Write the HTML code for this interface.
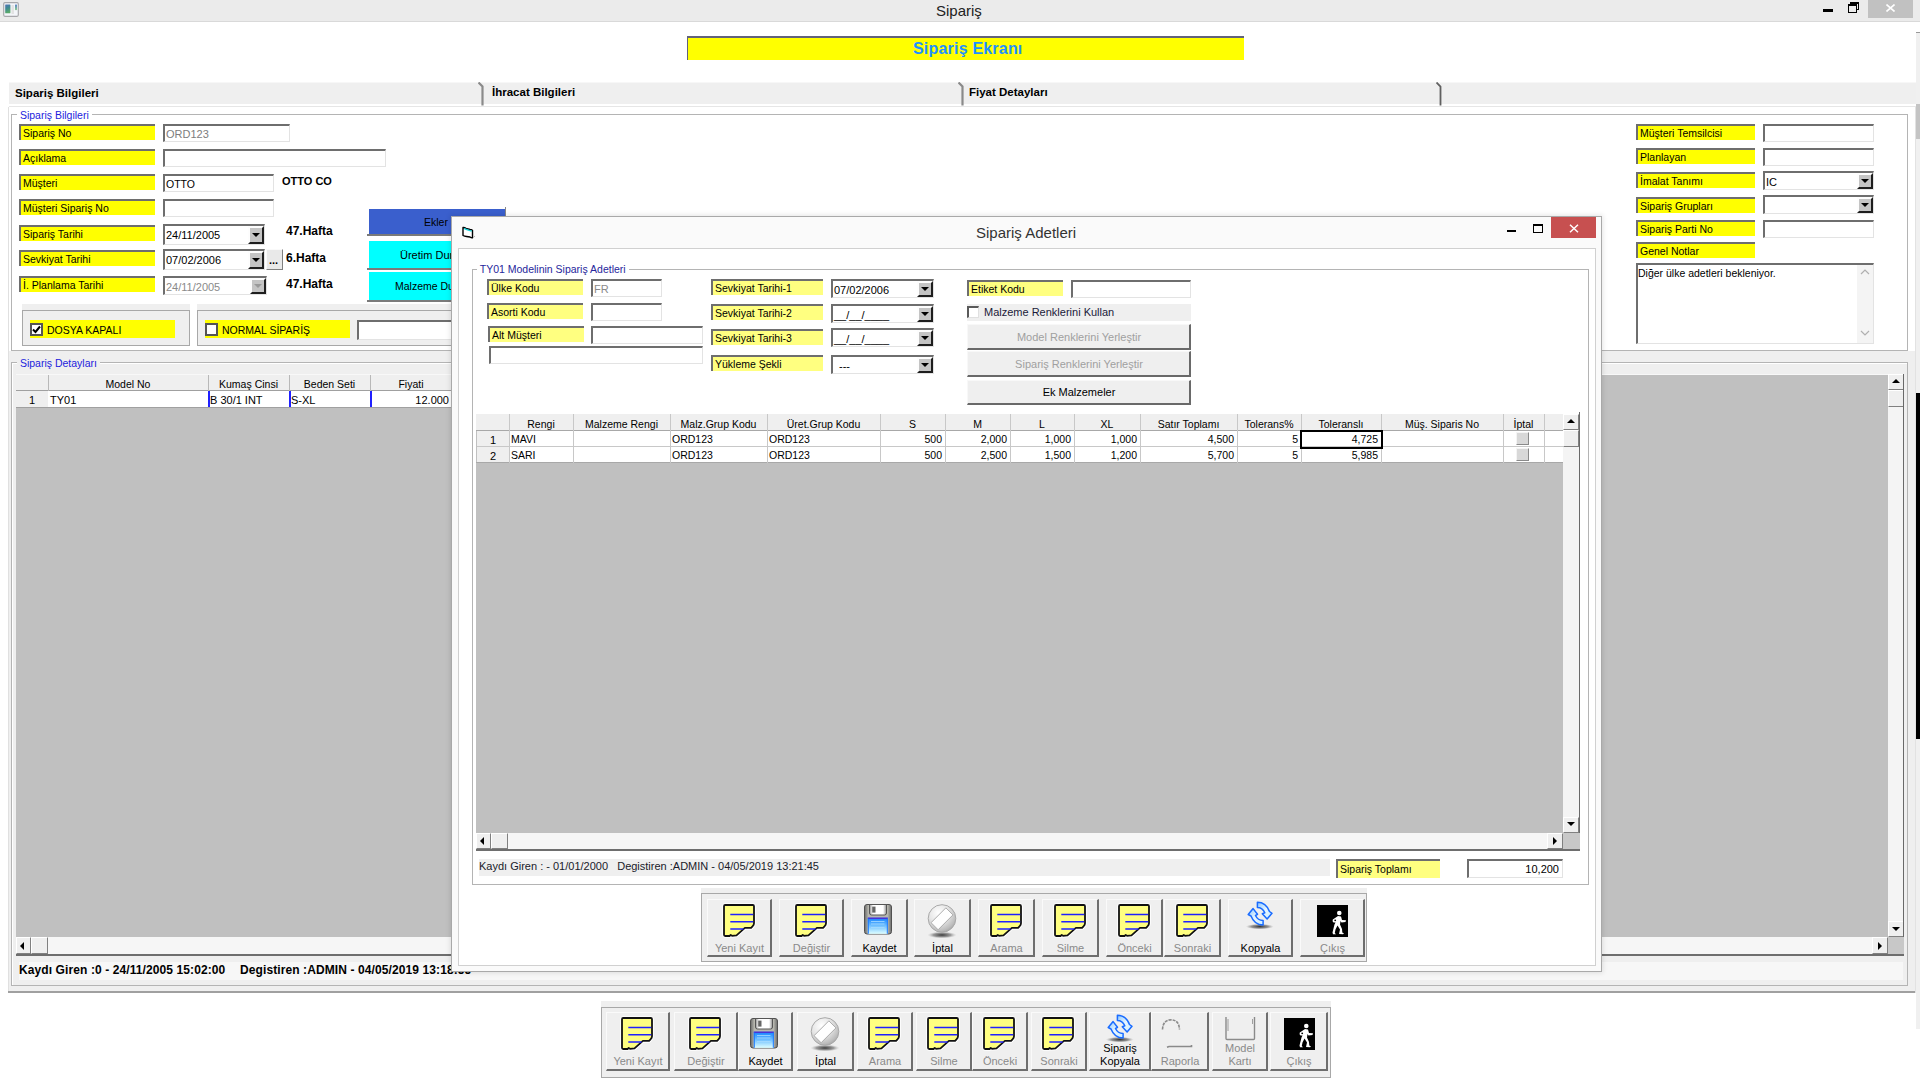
<!DOCTYPE html>
<html><head><meta charset="utf-8"><title>Sipariş</title>
<style>
html,body{margin:0;padding:0;}
body{width:1920px;height:1080px;position:relative;overflow:hidden;background:#fff;font-family:"Liberation Sans",sans-serif;font-size:11px;color:#000;}
body div, body svg{position:absolute;}
</style></head><body>
<div style="left:0px;top:0px;width:1920px;height:21px;background:#ebebeb;"></div>
<div style="left:0px;top:21px;width:1920px;height:1px;background:#d9d9d9;"></div>
<svg style="left:3px;top:2px" width="16" height="15" viewBox="0 0 16 15">
<defs><linearGradient id="ai1" x1="0" x2="0.3" y1="0" y2="1"><stop offset="0" stop-color="#4f72b8"/><stop offset="0.5" stop-color="#3f8a90"/><stop offset="1" stop-color="#5aaa6a"/></linearGradient>
<linearGradient id="ai2" x1="0" x2="0" y1="0" y2="1"><stop offset="0" stop-color="#5a80c8"/><stop offset="1" stop-color="#8ed08e"/></linearGradient></defs>
<rect x="0.7" y="0.7" width="14.6" height="13.6" rx="1.2" fill="#f4f6fa" stroke="#a8a8ac" stroke-width="1.2"/>
<rect x="2.2" y="2.6" width="5.2" height="8.6" rx="0.5" fill="url(#ai1)"/>
<rect x="8.5" y="3" width="2.4" height="9" fill="#e2e2e2"/>
<rect x="12" y="2.6" width="2" height="5.5" fill="url(#ai2)"/>
</svg>
<div style="left:936px;top:1px;font-size:15px;line-height:19px;color:#222;white-space:pre;">Sipariş</div>
<div style="left:1823px;top:9px;width:10px;height:3px;background:#000;"></div>
<div style="left:1850px;top:2px;width:9px;height:8px;box-sizing:border-box;border:1px solid #000;border-top-width:2px;"></div>
<div style="left:1848px;top:4px;width:9px;height:9px;box-sizing:border-box;border:1px solid #000;border-top-width:2px;background:#ebebeb;"></div>
<div style="left:1868px;top:0px;width:45px;height:18px;background:#c1c1c1;"></div>
<svg style="left:1886px;top:4px" width="9" height="8" viewBox="0 0 9 8"><path d="M0.5 0.5 L8.5 7.5 M8.5 0.5 L0.5 7.5" stroke="#fff" stroke-width="1.6"/></svg>
<div style="left:1916px;top:32px;width:4px;height:997px;background:#f0f0f0;"></div>
<div style="left:1916px;top:32px;width:4px;height:1px;background:#999;"></div>
<div style="left:1916px;top:104px;width:4px;height:35px;background:#c4c4c4;"></div>
<div style="left:1916px;top:393px;width:4px;height:346px;background:#000;"></div>
<div style="left:687px;top:36px;width:557px;height:24px;background:#ffff00;box-sizing:border-box;border-top:2px solid #62627a;border-left:1px solid #62627a;"></div>
<div style="left:913px;top:39px;font-size:16px;line-height:20px;color:#1e90ff;white-space:pre;font-weight:bold;letter-spacing:0.2px;">Sipariş Ekranı</div>
<div style="left:9px;top:82px;width:1907px;height:22px;background:#efefef;border-top:1px solid #f7f7f7;box-sizing:border-box;"></div>
<div style="left:9px;top:104px;width:1907px;height:2px;background:#fff;"></div>
<div style="left:9px;top:106px;width:1907px;height:1px;background:#e6e6e6;"></div>
<div style="left:15px;top:86px;font-size:11.5px;line-height:14px;color:#000;white-space:pre;font-weight:bold;">Sipariş Bilgileri</div>
<div style="left:492px;top:85px;font-size:11.5px;line-height:14px;color:#000;white-space:pre;font-weight:bold;">İhracat Bilgileri</div>
<div style="left:969px;top:85px;font-size:11.5px;line-height:14px;color:#000;white-space:pre;font-weight:bold;">Fiyat Detayları</div>
<svg style="left:478px;top:82px" width="8" height="25" viewBox="0 0 8 25"><path d="M0.5 0.5 L4.5 4.5 V23.5" stroke="#8a8a8a" stroke-width="2.2" fill="none"/></svg>
<svg style="left:958px;top:82px" width="8" height="25" viewBox="0 0 8 25"><path d="M0.5 0.5 L4.5 4.5 V23.5" stroke="#8a8a8a" stroke-width="2.2" fill="none"/></svg>
<svg style="left:1436px;top:82px" width="8" height="25" viewBox="0 0 8 25"><path d="M0.5 0.5 L4.5 4.5 V23.5" stroke="#606060" stroke-width="1.8" fill="none"/></svg>
<div style="left:9px;top:107px;width:1907px;height:244px;background:#fff;"></div>
<div style="left:9px;top:351px;width:1907px;height:640px;background:#efefef;"></div>
<div style="left:8px;top:107px;width:1px;height:886px;background:#e0e0e0;"></div>
<div style="left:8px;top:991px;width:1908px;height:2px;background:#a0a0a0;"></div>
<div style="left:1915px;top:107px;width:1px;height:886px;background:#e2e2e2;"></div>
<div style="left:11px;top:114px;width:1897px;height:237px;background:#fff;box-sizing:border-box;border:1px solid #b4b4b4;"></div>
<div style="left:17px;top:109px;font-size:10.5px;line-height:13px;color:#2222dd;white-space:pre;background:#fff;"> Sipariş Bilgileri </div>
<div style="left:19px;top:124px;width:136px;height:16px;background:#ffff00;box-sizing:border-box;border-top:2px solid #6e6e6e;border-left:2px solid #6e6e6e;"></div>
<div style="left:23px;top:127px;font-size:10.5px;line-height:13px;color:#000;white-space:pre;">Sipariş No</div>
<div style="left:19px;top:149px;width:136px;height:16px;background:#ffff00;box-sizing:border-box;border-top:2px solid #6e6e6e;border-left:2px solid #6e6e6e;"></div>
<div style="left:23px;top:152px;font-size:10.5px;line-height:13px;color:#000;white-space:pre;">Açıklama</div>
<div style="left:19px;top:174px;width:136px;height:16px;background:#ffff00;box-sizing:border-box;border-top:2px solid #6e6e6e;border-left:2px solid #6e6e6e;"></div>
<div style="left:23px;top:177px;font-size:10.5px;line-height:13px;color:#000;white-space:pre;">Müşteri</div>
<div style="left:19px;top:199px;width:136px;height:16px;background:#ffff00;box-sizing:border-box;border-top:2px solid #6e6e6e;border-left:2px solid #6e6e6e;"></div>
<div style="left:23px;top:202px;font-size:10.5px;line-height:13px;color:#000;white-space:pre;">Müşteri Sipariş No</div>
<div style="left:19px;top:225px;width:136px;height:16px;background:#ffff00;box-sizing:border-box;border-top:2px solid #6e6e6e;border-left:2px solid #6e6e6e;"></div>
<div style="left:23px;top:228px;font-size:10.5px;line-height:13px;color:#000;white-space:pre;">Sipariş Tarihi</div>
<div style="left:19px;top:250px;width:136px;height:16px;background:#ffff00;box-sizing:border-box;border-top:2px solid #6e6e6e;border-left:2px solid #6e6e6e;"></div>
<div style="left:23px;top:253px;font-size:10.5px;line-height:13px;color:#000;white-space:pre;">Sevkiyat Tarihi</div>
<div style="left:19px;top:276px;width:136px;height:16px;background:#ffff00;box-sizing:border-box;border-top:2px solid #6e6e6e;border-left:2px solid #6e6e6e;"></div>
<div style="left:23px;top:279px;font-size:10.5px;line-height:13px;color:#000;white-space:pre;">İ. Planlama Tarihi</div>
<div style="left:163px;top:124px;width:127px;height:18px;background:#fff;box-sizing:border-box;border-top:2px solid #6e6e6e;border-left:2px solid #6e6e6e;border-right:1px solid #e3e3e3;border-bottom:1px solid #e3e3e3;"></div>
<div style="left:166px;top:127px;font-size:11px;line-height:14px;color:#7d7d7d;white-space:pre;">ORD123</div>
<div style="left:163px;top:149px;width:223px;height:18px;background:#fff;box-sizing:border-box;border-top:2px solid #6e6e6e;border-left:2px solid #6e6e6e;border-right:1px solid #e3e3e3;border-bottom:1px solid #e3e3e3;"></div>
<div style="left:163px;top:174px;width:111px;height:18px;background:#fff;box-sizing:border-box;border-top:2px solid #6e6e6e;border-left:2px solid #6e6e6e;border-right:1px solid #e3e3e3;border-bottom:1px solid #e3e3e3;"></div>
<div style="left:166px;top:178px;font-size:10.5px;line-height:13px;color:#000;white-space:pre;">OTTO</div>
<div style="left:163px;top:199px;width:111px;height:18px;background:#fff;box-sizing:border-box;border-top:2px solid #6e6e6e;border-left:2px solid #6e6e6e;border-right:1px solid #e3e3e3;border-bottom:1px solid #e3e3e3;"></div>
<div style="left:163px;top:224px;width:102px;height:21px;background:#fff;box-sizing:border-box;border-top:2px solid #6e6e6e;border-left:2px solid #6e6e6e;border-right:1px solid #e3e3e3;border-bottom:1px solid #e3e3e3;"></div>
<div style="left:166px;top:228px;font-size:11px;line-height:14px;color:#000;white-space:pre;">24/11/2005</div>
<div style="left:248px;top:226px;width:16px;height:18px;background:#c4c4c4;box-sizing:border-box;border-top:2px solid #fdfdfd;border-left:2px solid #fdfdfd;border-right:2px solid #1e1e1e;border-bottom:2px solid #1e1e1e;"></div>
<div style="left:251.5px;top:233.0px;width:0;height:0;border-left:4.0px solid transparent;border-right:4.0px solid transparent;border-top:4px solid #000;"></div>
<div style="left:163px;top:249px;width:102px;height:21px;background:#fff;box-sizing:border-box;border-top:2px solid #6e6e6e;border-left:2px solid #6e6e6e;border-right:1px solid #e3e3e3;border-bottom:1px solid #e3e3e3;"></div>
<div style="left:166px;top:253px;font-size:11px;line-height:14px;color:#000;white-space:pre;">07/02/2006</div>
<div style="left:248px;top:251px;width:16px;height:18px;background:#c4c4c4;box-sizing:border-box;border-top:2px solid #fdfdfd;border-left:2px solid #fdfdfd;border-right:2px solid #1e1e1e;border-bottom:2px solid #1e1e1e;"></div>
<div style="left:251.5px;top:258.0px;width:0;height:0;border-left:4.0px solid transparent;border-right:4.0px solid transparent;border-top:4px solid #000;"></div>
<div style="left:266px;top:249px;width:17px;height:21px;background:#e9e9e9;box-sizing:border-box;border-top:1px solid #fafafa;border-left:1px solid #fafafa;border-right:1px solid #808080;border-bottom:1px solid #808080;"></div>
<div style="left:269px;top:253px;font-size:11px;line-height:14px;color:#000;white-space:pre;font-weight:bold;">...</div>
<div style="left:163px;top:276px;width:104px;height:19px;background:#fff;box-sizing:border-box;border-top:2px solid #6e6e6e;border-left:2px solid #6e6e6e;border-right:1px solid #e3e3e3;border-bottom:1px solid #e3e3e3;"></div>
<div style="left:166px;top:280px;font-size:11px;line-height:14px;color:#8a8a8a;white-space:pre;">24/11/2005</div>
<div style="left:250px;top:278px;width:16px;height:16px;background:#c4c4c4;box-sizing:border-box;border-top:2px solid #fdfdfd;border-left:2px solid #fdfdfd;border-right:2px solid #1e1e1e;border-bottom:2px solid #1e1e1e;"></div>
<div style="left:253.5px;top:284.0px;width:0;height:0;border-left:4.0px solid transparent;border-right:4.0px solid transparent;border-top:4px solid #9a9a9a;"></div>
<div style="left:282px;top:174px;font-size:11px;line-height:14px;color:#000;white-space:pre;font-weight:bold;">OTTO CO</div>
<div style="left:286px;top:224px;font-size:12px;line-height:15px;color:#000;white-space:pre;font-weight:bold;">47.Hafta</div>
<div style="left:286px;top:251px;font-size:12px;line-height:15px;color:#000;white-space:pre;font-weight:bold;">6.Hafta</div>
<div style="left:286px;top:277px;font-size:12px;line-height:15px;color:#000;white-space:pre;font-weight:bold;">47.Hafta</div>
<div style="left:369px;top:209px;width:137px;height:25px;background:#3a5fcd;"></div>
<div style="left:367px;top:234px;width:139px;height:2px;background:#7a7a7a;"></div>
<div style="left:505px;top:207px;width:1px;height:27px;background:#888;"></div>
<div style="left:424px;top:216px;font-size:10.5px;line-height:13px;color:#000;white-space:pre;">Ekler</div>
<div style="left:369px;top:241px;width:137px;height:27px;background:#00ffff;"></div>
<div style="left:367px;top:268px;width:139px;height:2px;background:#7a7a7a;"></div>
<div style="left:400px;top:248px;font-size:11px;line-height:14px;color:#000;white-space:pre;">Üretim Durumu</div>
<div style="left:369px;top:272px;width:137px;height:28px;background:#00ffff;"></div>
<div style="left:367px;top:300px;width:139px;height:2px;background:#7a7a7a;"></div>
<div style="left:395px;top:280px;font-size:10.5px;line-height:13px;color:#000;white-space:pre;">Malzeme Durumu</div>
<div style="left:22px;top:304px;width:168px;height:42px;background:#efefef;"></div>
<div style="left:22px;top:310px;width:168px;height:36px;box-sizing:border-box;border:1px solid #a8a8a8;"></div>
<div style="left:30px;top:320px;width:145px;height:18px;background:#ffff00;"></div>
<div style="left:30px;top:323px;width:13px;height:13px;background:#fff;box-sizing:border-box;border:2px solid #555;"></div>
<svg style="left:30px;top:323px" width="13" height="13" viewBox="0 0 13 13"><path d="M3 6.5 L5.5 9 L10 3.5" stroke="#000" stroke-width="2" fill="none"/></svg>
<div style="left:47px;top:324px;font-size:10.5px;line-height:13px;color:#000;white-space:pre;">DOSYA KAPALI</div>
<div style="left:197px;top:304px;width:300px;height:42px;background:#efefef;"></div>
<div style="left:197px;top:310px;width:300px;height:36px;box-sizing:border-box;border:1px solid #a8a8a8;"></div>
<div style="left:205px;top:320px;width:145px;height:18px;background:#ffff00;"></div>
<div style="left:205px;top:323px;width:13px;height:13px;background:#fff;box-sizing:border-box;border:2px solid #555;"></div>
<div style="left:222px;top:324px;font-size:10.5px;line-height:13px;color:#000;white-space:pre;">NORMAL SİPARİŞ</div>
<div style="left:357px;top:320px;width:140px;height:20px;background:#fff;box-sizing:border-box;border-top:2px solid #6e6e6e;border-left:2px solid #6e6e6e;border-right:1px solid #e3e3e3;border-bottom:1px solid #e3e3e3;"></div>
<div style="left:1636px;top:124px;width:119px;height:16px;background:#ffff00;box-sizing:border-box;border-top:2px solid #6e6e6e;border-left:2px solid #6e6e6e;"></div>
<div style="left:1640px;top:127px;font-size:10.5px;line-height:13px;color:#000;white-space:pre;">Müşteri Temsilcisi</div>
<div style="left:1636px;top:148px;width:119px;height:16px;background:#ffff00;box-sizing:border-box;border-top:2px solid #6e6e6e;border-left:2px solid #6e6e6e;"></div>
<div style="left:1640px;top:151px;font-size:10.5px;line-height:13px;color:#000;white-space:pre;">Planlayan</div>
<div style="left:1636px;top:172px;width:119px;height:16px;background:#ffff00;box-sizing:border-box;border-top:2px solid #6e6e6e;border-left:2px solid #6e6e6e;"></div>
<div style="left:1640px;top:175px;font-size:10.5px;line-height:13px;color:#000;white-space:pre;">İmalat Tanımı</div>
<div style="left:1636px;top:197px;width:119px;height:16px;background:#ffff00;box-sizing:border-box;border-top:2px solid #6e6e6e;border-left:2px solid #6e6e6e;"></div>
<div style="left:1640px;top:200px;font-size:10.5px;line-height:13px;color:#000;white-space:pre;">Sipariş Grupları</div>
<div style="left:1636px;top:220px;width:119px;height:16px;background:#ffff00;box-sizing:border-box;border-top:2px solid #6e6e6e;border-left:2px solid #6e6e6e;"></div>
<div style="left:1640px;top:223px;font-size:10.5px;line-height:13px;color:#000;white-space:pre;">Sipariş Parti No</div>
<div style="left:1636px;top:242px;width:119px;height:16px;background:#ffff00;box-sizing:border-box;border-top:2px solid #6e6e6e;border-left:2px solid #6e6e6e;"></div>
<div style="left:1640px;top:245px;font-size:10.5px;line-height:13px;color:#000;white-space:pre;">Genel Notlar</div>
<div style="left:1763px;top:124px;width:111px;height:18px;background:#fff;box-sizing:border-box;border-top:2px solid #6e6e6e;border-left:2px solid #6e6e6e;border-right:1px solid #e3e3e3;border-bottom:1px solid #e3e3e3;"></div>
<div style="left:1763px;top:148px;width:111px;height:18px;background:#fff;box-sizing:border-box;border-top:2px solid #6e6e6e;border-left:2px solid #6e6e6e;border-right:1px solid #e3e3e3;border-bottom:1px solid #e3e3e3;"></div>
<div style="left:1763px;top:171px;width:111px;height:19px;background:#fff;box-sizing:border-box;border-top:2px solid #6e6e6e;border-left:2px solid #6e6e6e;border-right:1px solid #e3e3e3;border-bottom:1px solid #e3e3e3;"></div>
<div style="left:1766px;top:175px;font-size:11px;line-height:14px;color:#000;white-space:pre;">IC</div>
<div style="left:1857px;top:173px;width:16px;height:16px;background:#c4c4c4;box-sizing:border-box;border-top:2px solid #fdfdfd;border-left:2px solid #fdfdfd;border-right:2px solid #1e1e1e;border-bottom:2px solid #1e1e1e;"></div>
<div style="left:1860.5px;top:179.0px;width:0;height:0;border-left:4.0px solid transparent;border-right:4.0px solid transparent;border-top:4px solid #000;"></div>
<div style="left:1763px;top:195px;width:111px;height:19px;background:#fff;box-sizing:border-box;border-top:2px solid #6e6e6e;border-left:2px solid #6e6e6e;border-right:1px solid #e3e3e3;border-bottom:1px solid #e3e3e3;"></div>
<div style="left:1857px;top:197px;width:16px;height:16px;background:#c4c4c4;box-sizing:border-box;border-top:2px solid #fdfdfd;border-left:2px solid #fdfdfd;border-right:2px solid #1e1e1e;border-bottom:2px solid #1e1e1e;"></div>
<div style="left:1860.5px;top:203.0px;width:0;height:0;border-left:4.0px solid transparent;border-right:4.0px solid transparent;border-top:4px solid #000;"></div>
<div style="left:1763px;top:220px;width:111px;height:18px;background:#fff;box-sizing:border-box;border-top:2px solid #6e6e6e;border-left:2px solid #6e6e6e;border-right:1px solid #e3e3e3;border-bottom:1px solid #e3e3e3;"></div>
<div style="left:1636px;top:263px;width:238px;height:81px;background:#fff;box-sizing:border-box;border-top:2px solid #6e6e6e;border-left:2px solid #6e6e6e;border-right:1px solid #e3e3e3;border-bottom:1px solid #e3e3e3;"></div>
<div style="left:1638px;top:267px;font-size:10.5px;line-height:13px;color:#000;white-space:pre;">Diğer ülke adetleri bekleniyor.</div>
<div style="left:1857px;top:265px;width:16px;height:78px;background:#f4f4f4;"></div>
<svg style="left:1860px;top:269px" width="10" height="6" viewBox="0 0 10 6"><path d="M1 5 L5 1 L9 5" stroke="#b0b0b0" stroke-width="1.2" fill="none"/></svg>
<svg style="left:1860px;top:330px" width="10" height="6" viewBox="0 0 10 6"><path d="M1 1 L5 5 L9 1" stroke="#b0b0b0" stroke-width="1.2" fill="none"/></svg>
<div style="left:11px;top:362px;width:1897px;height:624px;box-sizing:border-box;border:1px solid #b4b4b4;"></div>
<div style="left:12px;top:363px;width:1895px;height:622px;box-sizing:border-box;border:1px solid #fff;border-right:none;border-bottom:none;"></div>
<div style="left:17px;top:357px;font-size:10.5px;line-height:13px;color:#2222dd;white-space:pre;background:#efefef;"> Sipariş Detayları </div>
<div style="left:16px;top:374px;width:1888px;height:582px;background:#c0c0c0;"></div>
<div style="left:16px;top:374px;width:1888px;height:1px;background:#f8f8f8;"></div>
<div style="left:16px;top:375px;width:436px;height:16px;background:#efefef;"></div>
<div style="left:16px;top:390px;width:436px;height:1px;background:#a0a0a0;"></div>
<div style="left:48px;top:375px;width:1px;height:32px;background:#b8b8b8;"></div>
<div style="left:48px;top:378px;font-size:10.5px;line-height:13px;color:#000;white-space:pre;width:160px;text-align:center;">Model No</div>
<div style="left:208px;top:375px;width:1px;height:32px;background:#b8b8b8;"></div>
<div style="left:208px;top:378px;font-size:10.5px;line-height:13px;color:#000;white-space:pre;width:81px;text-align:center;">Kumaş Cinsi</div>
<div style="left:289px;top:375px;width:1px;height:32px;background:#b8b8b8;"></div>
<div style="left:289px;top:378px;font-size:10.5px;line-height:13px;color:#000;white-space:pre;width:81px;text-align:center;">Beden Seti</div>
<div style="left:370px;top:375px;width:1px;height:32px;background:#b8b8b8;"></div>
<div style="left:370px;top:378px;font-size:10.5px;line-height:13px;color:#000;white-space:pre;width:82px;text-align:center;">Fiyati</div>
<div style="left:16px;top:391px;width:32px;height:16px;background:#efefef;"></div>
<div style="left:48px;top:391px;width:404px;height:16px;background:#fff;"></div>
<div style="left:16px;top:407px;width:436px;height:1px;background:#a0a0a0;"></div>
<div style="left:16px;top:393px;font-size:11px;line-height:14px;color:#000;white-space:pre;width:32px;text-align:center;">1</div>
<div style="left:50px;top:393px;font-size:11px;line-height:14px;color:#000;white-space:pre;">TY01</div>
<div style="left:210px;top:393px;font-size:11px;line-height:14px;color:#000;white-space:pre;">B 30/1 INT</div>
<div style="left:291px;top:393px;font-size:11px;line-height:14px;color:#000;white-space:pre;">S-XL</div>
<div style="left:370px;top:393px;font-size:11px;line-height:14px;color:#000;white-space:pre;width:79px;text-align:right;">12.000</div>
<div style="left:208px;top:391px;width:2px;height:16px;background:#2020ff;"></div>
<div style="left:289px;top:391px;width:2px;height:16px;background:#2020ff;"></div>
<div style="left:370px;top:391px;width:2px;height:16px;background:#2020ff;"></div>
<div style="left:1888px;top:374px;width:16px;height:563px;background:#f4f4f4;"></div>
<div style="left:1888px;top:374px;width:16px;height:16px;background:#efefef;box-sizing:border-box;border-top:1px solid #fff;border-left:1px solid #fff;border-right:1px solid #808080;border-bottom:1px solid #808080;"></div>
<div style="left:1891.5px;top:379px;width:0;height:0;border-left:4.0px solid transparent;border-right:4.0px solid transparent;border-bottom:4px solid #000;"></div>
<div style="left:1888px;top:390px;width:16px;height:17px;background:#efefef;box-sizing:border-box;border-top:1px solid #fff;border-left:1px solid #fff;border-right:1px solid #808080;border-bottom:1px solid #808080;"></div>
<div style="left:1888px;top:921px;width:16px;height:16px;background:#efefef;box-sizing:border-box;border-top:1px solid #fff;border-left:1px solid #fff;border-right:1px solid #808080;border-bottom:1px solid #808080;"></div>
<div style="left:1891.5px;top:927px;width:0;height:0;border-left:4.0px solid transparent;border-right:4.0px solid transparent;border-top:4px solid #000;"></div>
<div style="left:1903px;top:374px;width:1px;height:582px;background:#696969;"></div>
<div style="left:16px;top:937px;width:1872px;height:17px;background:#f6f6f6;"></div>
<div style="left:16px;top:937px;width:15px;height:17px;background:#efefef;box-sizing:border-box;border-top:1px solid #fff;border-left:1px solid #fff;border-right:1px solid #808080;border-bottom:1px solid #808080;"></div>
<div style="left:20px;top:941.5px;width:0;height:0;border-top:4.0px solid transparent;border-bottom:4.0px solid transparent;border-right:4px solid #000;"></div>
<div style="left:31px;top:937px;width:17px;height:17px;background:#efefef;box-sizing:border-box;border-top:1px solid #fff;border-left:1px solid #fff;border-right:1px solid #808080;border-bottom:1px solid #808080;"></div>
<div style="left:1872px;top:937px;width:16px;height:17px;background:#efefef;box-sizing:border-box;border-top:1px solid #fff;border-left:1px solid #fff;border-right:1px solid #808080;border-bottom:1px solid #808080;"></div>
<div style="left:1878px;top:941.5px;width:0;height:0;border-top:4.0px solid transparent;border-bottom:4.0px solid transparent;border-left:4px solid #000;"></div>
<div style="left:1888px;top:937px;width:16px;height:17px;background:#c8c8c8;"></div>
<div style="left:16px;top:954px;width:1888px;height:2px;background:#6e6e6e;"></div>
<div style="left:19px;top:962px;width:1884px;height:18px;background:#f7f7f7;"></div>
<div style="left:19px;top:963px;font-size:12px;line-height:15px;color:#000;white-space:pre;font-weight:bold;letter-spacing:0.1px;">Kaydı Giren :0 - 24/11/2005 15:02:00</div>
<div style="left:240px;top:963px;font-size:12px;line-height:15px;color:#000;white-space:pre;font-weight:bold;letter-spacing:0.1px;">Degistiren :ADMIN - 04/05/2019 13:18:55</div>
<div style="left:601px;top:1001px;width:730px;height:7px;background:#efefef;"></div>
<div style="left:601px;top:1007px;width:730px;height:71px;background:#efefef;box-sizing:border-box;border:1px solid #a8a8a8;"></div>
<div style="left:606px;top:1012px;width:64px;height:59px;background:#efefef;box-sizing:border-box;border-top:1px solid #fafafa;border-left:1px solid #fafafa;border-right:2px solid #6e6e6e;border-bottom:2px solid #6e6e6e;"></div>
<svg style="left:619px;top:1015px" width="36" height="37" viewBox="-2 -2 36 37">
<path d="M1 2.2 Q1 1 2.2 1 L29.8 1 Q31 1 31 2.2 L31 19.3 Q31 21 29.5 22.4 L28.1 23.9 L21.9 23.9 L13.5 31.4 L9 31.8 L7.7 31 L6.5 32 L2.2 32 Q1 32 1 30.8 Z" fill="#ffff80" stroke="#fff" stroke-width="3.6" stroke-linejoin="round"/>
<path d="M1 2.2 Q1 1 2.2 1 L29.8 1 Q31 1 31 2.2 L31 19.3 Q31 21 29.5 22.4 L28.1 23.9 L21.9 23.9 L13.5 31.4 L9 31.8 L7.7 31 L6.5 32 L2.2 32 Q1 32 1 30.8 Z" fill="#ffff80" stroke="#111" stroke-width="1.8" stroke-linejoin="round"/>
<path d="M7.3 10.5 H30.2 M7.3 17.8 H30.2 M7.3 25 H20.5" stroke="#2020ff" stroke-width="1.4"/>
</svg>
<div style="left:606px;top:1054px;font-size:11px;line-height:14px;color:#8a8a8a;white-space:pre;width:64px;text-align:center;">Yeni Kayıt</div>
<div style="left:674px;top:1012px;width:64px;height:59px;background:#efefef;box-sizing:border-box;border-top:1px solid #fafafa;border-left:1px solid #fafafa;border-right:2px solid #6e6e6e;border-bottom:2px solid #6e6e6e;"></div>
<svg style="left:687px;top:1015px" width="36" height="37" viewBox="-2 -2 36 37">
<path d="M1 2.2 Q1 1 2.2 1 L29.8 1 Q31 1 31 2.2 L31 19.3 Q31 21 29.5 22.4 L28.1 23.9 L21.9 23.9 L13.5 31.4 L9 31.8 L7.7 31 L6.5 32 L2.2 32 Q1 32 1 30.8 Z" fill="#ffff80" stroke="#fff" stroke-width="3.6" stroke-linejoin="round"/>
<path d="M1 2.2 Q1 1 2.2 1 L29.8 1 Q31 1 31 2.2 L31 19.3 Q31 21 29.5 22.4 L28.1 23.9 L21.9 23.9 L13.5 31.4 L9 31.8 L7.7 31 L6.5 32 L2.2 32 Q1 32 1 30.8 Z" fill="#ffff80" stroke="#111" stroke-width="1.8" stroke-linejoin="round"/>
<path d="M7.3 10.5 H30.2 M7.3 17.8 H30.2 M7.3 25 H20.5" stroke="#2020ff" stroke-width="1.4"/>
</svg>
<div style="left:674px;top:1054px;font-size:11px;line-height:14px;color:#8a8a8a;white-space:pre;width:64px;text-align:center;">Değiştir</div>
<div style="left:738px;top:1012px;width:55px;height:59px;background:#efefef;box-sizing:border-box;border-top:1px solid #fafafa;border-left:1px solid #fafafa;border-right:2px solid #6e6e6e;border-bottom:2px solid #6e6e6e;"></div>
<svg style="left:750px;top:1018px" width="28" height="31" viewBox="0 0 28 31">
<defs><linearGradient id="fbody" x1="0" x2="1" y1="0" y2="0"><stop offset="0" stop-color="#6a6a6a"/><stop offset="0.15" stop-color="#b8b8b0"/><stop offset="0.85" stop-color="#b8b8b0"/><stop offset="1" stop-color="#6a6a6a"/></linearGradient>
<linearGradient id="flab" x1="0" x2="0" y1="0" y2="1"><stop offset="0" stop-color="#1080ff"/><stop offset="0.5" stop-color="#70c0ff"/><stop offset="1" stop-color="#e0ffff"/></linearGradient>
<linearGradient id="fsh" x1="0" x2="1" y1="0" y2="0"><stop offset="0" stop-color="#909090"/><stop offset="0.2" stop-color="#fff"/><stop offset="0.8" stop-color="#fff"/><stop offset="1" stop-color="#909090"/></linearGradient></defs>
<rect x="0.5" y="0.5" width="27" height="29.5" rx="2.5" fill="url(#fbody)" stroke="#505050"/>
<path d="M5.5 0.5 H22.5 V9 Q22.5 11 20.5 11 H7.5 Q5.5 11 5.5 9 Z" fill="url(#fsh)" stroke="#555"/>
<rect x="8.2" y="2.6" width="3.3" height="6" fill="#666"/>
<rect x="3.8" y="13.7" width="20" height="16.2" fill="url(#flab)"/>
<path d="M3.8 14.2 H23.8" stroke="#5a14c8" stroke-width="1.1"/>
<path d="M4.3 14.5 V29.8 M23.3 14.5 V29.8" stroke="#1a78ff" stroke-width="1"/>
<path d="M7 17.5 H20.5 M7 20 H20.5 M7 23.5 H20.5" stroke="#a8dcff" stroke-width="0.8"/>
</svg>
<div style="left:738px;top:1054px;font-size:11px;line-height:14px;color:#000;white-space:pre;width:55px;text-align:center;">Kaydet</div>
<div style="left:797px;top:1012px;width:57px;height:59px;background:#efefef;box-sizing:border-box;border-top:1px solid #fafafa;border-left:1px solid #fafafa;border-right:2px solid #6e6e6e;border-bottom:2px solid #6e6e6e;"></div>
<svg style="left:810px;top:1017px" width="30" height="35" viewBox="0 0 30 35">
<defs><radialGradient id="csp" cx="0.38" cy="0.3" r="0.8"><stop offset="0" stop-color="#ffffff"/><stop offset="0.45" stop-color="#e6e6e6"/><stop offset="0.8" stop-color="#bdbdbd"/><stop offset="1" stop-color="#9a9a9a"/></radialGradient>
<radialGradient id="csh" cx="0.5" cy="0.5" r="0.5"><stop offset="0" stop-color="#303030" stop-opacity="0.95"/><stop offset="0.6" stop-color="#606060" stop-opacity="0.6"/><stop offset="1" stop-color="#aaa" stop-opacity="0"/></radialGradient></defs>
<ellipse cx="15" cy="31" rx="14.5" ry="3.4" fill="url(#csh)"/>
<circle cx="15" cy="14.5" r="13.8" fill="url(#csp)" stroke="#a8a8a8" stroke-width="1"/>
<rect x="4.5" y="9.8" width="21" height="10" fill="#fefefe" stroke="#a8a8a8" stroke-width="0.9" transform="rotate(-45 15 14.8)"/>
</svg>
<div style="left:797px;top:1054px;font-size:11px;line-height:14px;color:#000;white-space:pre;width:57px;text-align:center;">İptal</div>
<div style="left:857px;top:1012px;width:56px;height:59px;background:#efefef;box-sizing:border-box;border-top:1px solid #fafafa;border-left:1px solid #fafafa;border-right:2px solid #6e6e6e;border-bottom:2px solid #6e6e6e;"></div>
<svg style="left:866px;top:1015px" width="36" height="37" viewBox="-2 -2 36 37">
<path d="M1 2.2 Q1 1 2.2 1 L29.8 1 Q31 1 31 2.2 L31 19.3 Q31 21 29.5 22.4 L28.1 23.9 L21.9 23.9 L13.5 31.4 L9 31.8 L7.7 31 L6.5 32 L2.2 32 Q1 32 1 30.8 Z" fill="#ffff80" stroke="#fff" stroke-width="3.6" stroke-linejoin="round"/>
<path d="M1 2.2 Q1 1 2.2 1 L29.8 1 Q31 1 31 2.2 L31 19.3 Q31 21 29.5 22.4 L28.1 23.9 L21.9 23.9 L13.5 31.4 L9 31.8 L7.7 31 L6.5 32 L2.2 32 Q1 32 1 30.8 Z" fill="#ffff80" stroke="#111" stroke-width="1.8" stroke-linejoin="round"/>
<path d="M7.3 10.5 H30.2 M7.3 17.8 H30.2 M7.3 25 H20.5" stroke="#2020ff" stroke-width="1.4"/>
</svg>
<div style="left:857px;top:1054px;font-size:11px;line-height:14px;color:#8a8a8a;white-space:pre;width:56px;text-align:center;">Arama</div>
<div style="left:916px;top:1012px;width:56px;height:59px;background:#efefef;box-sizing:border-box;border-top:1px solid #fafafa;border-left:1px solid #fafafa;border-right:2px solid #6e6e6e;border-bottom:2px solid #6e6e6e;"></div>
<svg style="left:925px;top:1015px" width="36" height="37" viewBox="-2 -2 36 37">
<path d="M1 2.2 Q1 1 2.2 1 L29.8 1 Q31 1 31 2.2 L31 19.3 Q31 21 29.5 22.4 L28.1 23.9 L21.9 23.9 L13.5 31.4 L9 31.8 L7.7 31 L6.5 32 L2.2 32 Q1 32 1 30.8 Z" fill="#ffff80" stroke="#fff" stroke-width="3.6" stroke-linejoin="round"/>
<path d="M1 2.2 Q1 1 2.2 1 L29.8 1 Q31 1 31 2.2 L31 19.3 Q31 21 29.5 22.4 L28.1 23.9 L21.9 23.9 L13.5 31.4 L9 31.8 L7.7 31 L6.5 32 L2.2 32 Q1 32 1 30.8 Z" fill="#ffff80" stroke="#111" stroke-width="1.8" stroke-linejoin="round"/>
<path d="M7.3 10.5 H30.2 M7.3 17.8 H30.2 M7.3 25 H20.5" stroke="#2020ff" stroke-width="1.4"/>
</svg>
<div style="left:916px;top:1054px;font-size:11px;line-height:14px;color:#8a8a8a;white-space:pre;width:56px;text-align:center;">Silme</div>
<div style="left:972px;top:1012px;width:56px;height:59px;background:#efefef;box-sizing:border-box;border-top:1px solid #fafafa;border-left:1px solid #fafafa;border-right:2px solid #6e6e6e;border-bottom:2px solid #6e6e6e;"></div>
<svg style="left:981px;top:1015px" width="36" height="37" viewBox="-2 -2 36 37">
<path d="M1 2.2 Q1 1 2.2 1 L29.8 1 Q31 1 31 2.2 L31 19.3 Q31 21 29.5 22.4 L28.1 23.9 L21.9 23.9 L13.5 31.4 L9 31.8 L7.7 31 L6.5 32 L2.2 32 Q1 32 1 30.8 Z" fill="#ffff80" stroke="#fff" stroke-width="3.6" stroke-linejoin="round"/>
<path d="M1 2.2 Q1 1 2.2 1 L29.8 1 Q31 1 31 2.2 L31 19.3 Q31 21 29.5 22.4 L28.1 23.9 L21.9 23.9 L13.5 31.4 L9 31.8 L7.7 31 L6.5 32 L2.2 32 Q1 32 1 30.8 Z" fill="#ffff80" stroke="#111" stroke-width="1.8" stroke-linejoin="round"/>
<path d="M7.3 10.5 H30.2 M7.3 17.8 H30.2 M7.3 25 H20.5" stroke="#2020ff" stroke-width="1.4"/>
</svg>
<div style="left:972px;top:1054px;font-size:11px;line-height:14px;color:#8a8a8a;white-space:pre;width:56px;text-align:center;">Önceki</div>
<div style="left:1031px;top:1012px;width:56px;height:59px;background:#efefef;box-sizing:border-box;border-top:1px solid #fafafa;border-left:1px solid #fafafa;border-right:2px solid #6e6e6e;border-bottom:2px solid #6e6e6e;"></div>
<svg style="left:1040px;top:1015px" width="36" height="37" viewBox="-2 -2 36 37">
<path d="M1 2.2 Q1 1 2.2 1 L29.8 1 Q31 1 31 2.2 L31 19.3 Q31 21 29.5 22.4 L28.1 23.9 L21.9 23.9 L13.5 31.4 L9 31.8 L7.7 31 L6.5 32 L2.2 32 Q1 32 1 30.8 Z" fill="#ffff80" stroke="#fff" stroke-width="3.6" stroke-linejoin="round"/>
<path d="M1 2.2 Q1 1 2.2 1 L29.8 1 Q31 1 31 2.2 L31 19.3 Q31 21 29.5 22.4 L28.1 23.9 L21.9 23.9 L13.5 31.4 L9 31.8 L7.7 31 L6.5 32 L2.2 32 Q1 32 1 30.8 Z" fill="#ffff80" stroke="#111" stroke-width="1.8" stroke-linejoin="round"/>
<path d="M7.3 10.5 H30.2 M7.3 17.8 H30.2 M7.3 25 H20.5" stroke="#2020ff" stroke-width="1.4"/>
</svg>
<div style="left:1031px;top:1054px;font-size:11px;line-height:14px;color:#8a8a8a;white-space:pre;width:56px;text-align:center;">Sonraki</div>
<div style="left:1089px;top:1012px;width:62px;height:59px;background:#efefef;box-sizing:border-box;border-top:1px solid #fafafa;border-left:1px solid #fafafa;border-right:2px solid #6e6e6e;border-bottom:2px solid #6e6e6e;"></div>
<svg style="left:1105px;top:1013px" width="30" height="32" viewBox="0 0 30 32">
<defs><radialGradient id="ksh" cx="0.5" cy="0.5" r="0.5"><stop offset="0" stop-color="#2a2a2a" stop-opacity="0.95"/><stop offset="0.6" stop-color="#555" stop-opacity="0.6"/><stop offset="1" stop-color="#999" stop-opacity="0"/></radialGradient>
<linearGradient id="kfill" x1="0" x2="1" y1="0" y2="1"><stop offset="0" stop-color="#8cc8ff"/><stop offset="0.5" stop-color="#e8f6ff"/><stop offset="1" stop-color="#c8ecff"/></linearGradient></defs>
<ellipse cx="14.8" cy="26.6" rx="14" ry="2.8" fill="url(#ksh)"/>
<path d="M12.4 2.2 Q21 2.2 24.5 11.5 L27 13.3 L22.1 18.9 L17.3 13.7 L19.8 12.8 Q17.5 7.4 12.4 7.4 Z" fill="url(#kfill)" stroke="#1a6cff" stroke-width="1.5" stroke-linejoin="round"/>
<path d="M18.1 25 Q9.5 25 6 16 L3.2 14.5 L8.1 8.6 L12.5 14.3 L10.5 15.5 Q12.8 20.5 18.1 20.5 Z" fill="url(#kfill)" stroke="#1a6cff" stroke-width="1.5" stroke-linejoin="round"/>
</svg>
<div style="left:1089px;top:1041px;font-size:11px;line-height:14px;color:#000;white-space:pre;width:62px;text-align:center;">Sipariş</div>
<div style="left:1089px;top:1054px;font-size:11px;line-height:14px;color:#000;white-space:pre;width:62px;text-align:center;">Kopyala</div>
<div style="left:1151px;top:1012px;width:58px;height:59px;background:#efefef;box-sizing:border-box;border-top:1px solid #fafafa;border-left:1px solid #fafafa;border-right:2px solid #6e6e6e;border-bottom:2px solid #6e6e6e;"></div>
<svg style="left:1161px;top:1019px" width="32" height="31" viewBox="0 0 32 31">
<path d="M1.5 10.5 Q2 1 10 0.8 Q18 1 18.5 10.5" stroke="#8a8a8a" stroke-width="1.6" fill="none" stroke-dasharray="3 1"/>
<path d="M6 28.3 L8 27.5 H30.5 V26" stroke="#8a8a8a" stroke-width="1.6" fill="none"/>
</svg>
<div style="left:1151px;top:1054px;font-size:11px;line-height:14px;color:#8a8a8a;white-space:pre;width:58px;text-align:center;">Raporla</div>
<div style="left:1212px;top:1012px;width:56px;height:59px;background:#efefef;box-sizing:border-box;border-top:1px solid #fafafa;border-left:1px solid #fafafa;border-right:2px solid #6e6e6e;border-bottom:2px solid #6e6e6e;"></div>
<svg style="left:1225px;top:1016px" width="31" height="25" viewBox="0 0 31 25">
<path d="M1 1 V22.5 Q1 23.5 2 23.5 H28.5 Q29.5 23.5 29.5 22.5 V1" stroke="#8a8a8a" stroke-width="1.4" fill="none"/>
<path d="M3 3 V15 M27.5 3 V8" stroke="#8a8a8a" stroke-width="0.8" fill="none"/>
</svg>
<div style="left:1212px;top:1041px;font-size:11px;line-height:14px;color:#8a8a8a;white-space:pre;width:56px;text-align:center;">Model</div>
<div style="left:1212px;top:1054px;font-size:11px;line-height:14px;color:#8a8a8a;white-space:pre;width:56px;text-align:center;">Kartı</div>
<div style="left:1270px;top:1012px;width:58px;height:59px;background:#efefef;box-sizing:border-box;border-top:1px solid #fafafa;border-left:1px solid #fafafa;border-right:2px solid #6e6e6e;border-bottom:2px solid #6e6e6e;"></div>
<svg style="left:1284px;top:1018px" width="31" height="32" viewBox="0 0 31 32">
<rect x="0" y="0" width="31" height="32" fill="#000"/>
<circle cx="22.3" cy="8" r="2.3" fill="#fff"/>
<path d="M21 11 L24 11.5 L25 15 L29 15.3 L28.5 17 L24.5 17.5 L23.5 16 L23 19.5 L25 24 L25.3 27.5 L27 28.5 L26 29.2 L22 29 L23 24.5 L20.5 20.5 L18.5 24.5 L17.8 28 L19 29.3 L16 29.2 L15.5 27.5 L17.5 19.5 L18.5 17.5 L16.5 17.5 Q15 16.5 15.8 14.5 Z" fill="#fff"/>
<circle cx="18.2" cy="15.3" r="0.9" fill="#000"/>
</svg>
<div style="left:1270px;top:1054px;font-size:11px;line-height:14px;color:#8a8a8a;white-space:pre;width:58px;text-align:center;">Çıkış</div>
<div style="left:451px;top:216px;width:1151px;height:756px;background:#fafafa;box-sizing:border-box;border:1px solid #a9a9a9;box-shadow:0 0 5px 1px rgba(0,0,0,0.10);"></div>
<svg style="left:462px;top:226px" width="14" height="14" viewBox="0 0 14 14">
<path d="M1 1.5 Q2.5 1.3 4 2.3 L8 3.5 Q9.5 3.8 10.5 4.3 L10.5 11.8 Q9.3 12 8 11 L4.5 10.5 Q2.5 10.3 1 9.5 Z" fill="#fff" stroke="#000" stroke-width="1.4" stroke-linejoin="round"/>
<path d="M2 2.7 Q3 2.6 4.2 3.4 L8 4.6 Q9 4.8 9.8 5.2" stroke="#10d0d8" stroke-width="1.3" fill="none"/>
<path d="M11.6 11.2 L12.8 10.2" stroke="#888" stroke-width="0.8"/>
</svg>
<div style="left:976px;top:223px;font-size:15px;line-height:19px;color:#333;white-space:pre;">Sipariş Adetleri</div>
<div style="left:1551px;top:217px;width:45px;height:21px;background:#c75050;"></div>
<svg style="left:1569px;top:224px" width="10" height="9" viewBox="0 0 10 9"><path d="M1 0.8 L9 8.2 M9 0.8 L1 8.2" stroke="#fff" stroke-width="1.5"/></svg>
<div style="left:1507px;top:230px;width:9px;height:2px;background:#000;"></div>
<div style="left:1533px;top:224px;width:10px;height:9px;box-sizing:border-box;border:1px solid #000;border-top-width:2px;"></div>
<div style="left:458px;top:248px;width:1138px;height:718px;background:#fff;box-sizing:border-box;border:1px solid #d0d0d0;"></div>
<div style="left:472px;top:269px;width:1117px;height:616px;box-sizing:border-box;border:1px solid #b4b4b4;"></div>
<div style="left:477px;top:263px;font-size:10.5px;line-height:13px;color:#26269c;white-space:pre;background:#fff;"> TY01 Modelinin Sipariş Adetleri </div>
<div style="left:487px;top:279px;width:96px;height:16px;background:#ffff80;box-sizing:border-box;border-top:2px solid #6e6e6e;border-left:2px solid #6e6e6e;"></div>
<div style="left:491px;top:282px;font-size:10.5px;line-height:13px;color:#000;white-space:pre;">Ülke Kodu</div>
<div style="left:591px;top:279px;width:71px;height:18px;background:#fff;box-sizing:border-box;border-top:2px solid #6e6e6e;border-left:2px solid #6e6e6e;border-right:1px solid #e3e3e3;border-bottom:1px solid #e3e3e3;"></div>
<div style="left:594px;top:282px;font-size:11px;line-height:14px;color:#8a8a8a;white-space:pre;">FR</div>
<div style="left:487px;top:303px;width:96px;height:16px;background:#ffff80;box-sizing:border-box;border-top:2px solid #6e6e6e;border-left:2px solid #6e6e6e;"></div>
<div style="left:491px;top:306px;font-size:10.5px;line-height:13px;color:#000;white-space:pre;">Asorti Kodu</div>
<div style="left:591px;top:303px;width:71px;height:18px;background:#fff;box-sizing:border-box;border-top:2px solid #6e6e6e;border-left:2px solid #6e6e6e;border-right:1px solid #e3e3e3;border-bottom:1px solid #e3e3e3;"></div>
<div style="left:488px;top:326px;width:96px;height:16px;background:#ffff80;box-sizing:border-box;border-top:2px solid #6e6e6e;border-left:2px solid #6e6e6e;"></div>
<div style="left:492px;top:329px;font-size:10.5px;line-height:13px;color:#000;white-space:pre;">Alt Müşteri</div>
<div style="left:591px;top:326px;width:112px;height:18px;background:#fff;box-sizing:border-box;border-top:2px solid #6e6e6e;border-left:2px solid #6e6e6e;border-right:1px solid #e3e3e3;border-bottom:1px solid #e3e3e3;"></div>
<div style="left:489px;top:346px;width:214px;height:18px;background:#fff;box-sizing:border-box;border-top:2px solid #6e6e6e;border-left:2px solid #6e6e6e;border-right:1px solid #e3e3e3;border-bottom:1px solid #e3e3e3;"></div>
<div style="left:711px;top:279px;width:112px;height:16px;background:#ffff80;box-sizing:border-box;border-top:2px solid #6e6e6e;border-left:2px solid #6e6e6e;"></div>
<div style="left:715px;top:282px;font-size:10.5px;line-height:13px;color:#000;white-space:pre;">Sevkiyat Tarihi-1</div>
<div style="left:711px;top:304px;width:112px;height:16px;background:#ffff80;box-sizing:border-box;border-top:2px solid #6e6e6e;border-left:2px solid #6e6e6e;"></div>
<div style="left:715px;top:307px;font-size:10.5px;line-height:13px;color:#000;white-space:pre;">Sevkiyat Tarihi-2</div>
<div style="left:711px;top:329px;width:112px;height:16px;background:#ffff80;box-sizing:border-box;border-top:2px solid #6e6e6e;border-left:2px solid #6e6e6e;"></div>
<div style="left:715px;top:332px;font-size:10.5px;line-height:13px;color:#000;white-space:pre;">Sevkiyat Tarihi-3</div>
<div style="left:711px;top:355px;width:112px;height:16px;background:#ffff80;box-sizing:border-box;border-top:2px solid #6e6e6e;border-left:2px solid #6e6e6e;"></div>
<div style="left:715px;top:358px;font-size:10.5px;line-height:13px;color:#000;white-space:pre;">Yükleme Şekli</div>
<div style="left:831px;top:279px;width:103px;height:19px;background:#fff;box-sizing:border-box;border-top:2px solid #6e6e6e;border-left:2px solid #6e6e6e;border-right:1px solid #e3e3e3;border-bottom:1px solid #e3e3e3;"></div>
<div style="left:834px;top:283px;font-size:11px;line-height:14px;color:#000;white-space:pre;">07/02/2006</div>
<div style="left:917px;top:281px;width:16px;height:16px;background:#c4c4c4;box-sizing:border-box;border-top:2px solid #fdfdfd;border-left:2px solid #fdfdfd;border-right:2px solid #1e1e1e;border-bottom:2px solid #1e1e1e;"></div>
<div style="left:920.5px;top:287.0px;width:0;height:0;border-left:4.0px solid transparent;border-right:4.0px solid transparent;border-top:4px solid #000;"></div>
<div style="left:831px;top:304px;width:103px;height:19px;background:#fff;box-sizing:border-box;border-top:2px solid #6e6e6e;border-left:2px solid #6e6e6e;border-right:1px solid #e3e3e3;border-bottom:1px solid #e3e3e3;"></div>
<div style="left:834px;top:308px;font-size:11px;line-height:14px;color:#000;white-space:pre;">__/__/____</div>
<div style="left:917px;top:306px;width:16px;height:16px;background:#c4c4c4;box-sizing:border-box;border-top:2px solid #fdfdfd;border-left:2px solid #fdfdfd;border-right:2px solid #1e1e1e;border-bottom:2px solid #1e1e1e;"></div>
<div style="left:920.5px;top:312.0px;width:0;height:0;border-left:4.0px solid transparent;border-right:4.0px solid transparent;border-top:4px solid #000;"></div>
<div style="left:831px;top:328px;width:103px;height:19px;background:#fff;box-sizing:border-box;border-top:2px solid #6e6e6e;border-left:2px solid #6e6e6e;border-right:1px solid #e3e3e3;border-bottom:1px solid #e3e3e3;"></div>
<div style="left:834px;top:332px;font-size:11px;line-height:14px;color:#000;white-space:pre;">__/__/____</div>
<div style="left:917px;top:330px;width:16px;height:16px;background:#c4c4c4;box-sizing:border-box;border-top:2px solid #fdfdfd;border-left:2px solid #fdfdfd;border-right:2px solid #1e1e1e;border-bottom:2px solid #1e1e1e;"></div>
<div style="left:920.5px;top:336.0px;width:0;height:0;border-left:4.0px solid transparent;border-right:4.0px solid transparent;border-top:4px solid #000;"></div>
<div style="left:831px;top:355px;width:103px;height:19px;background:#fff;box-sizing:border-box;border-top:2px solid #6e6e6e;border-left:2px solid #6e6e6e;border-right:1px solid #e3e3e3;border-bottom:1px solid #e3e3e3;"></div>
<div style="left:839px;top:359px;font-size:11px;line-height:14px;color:#000;white-space:pre;">---</div>
<div style="left:917px;top:357px;width:16px;height:16px;background:#c4c4c4;box-sizing:border-box;border-top:2px solid #fdfdfd;border-left:2px solid #fdfdfd;border-right:2px solid #1e1e1e;border-bottom:2px solid #1e1e1e;"></div>
<div style="left:920.5px;top:363.0px;width:0;height:0;border-left:4.0px solid transparent;border-right:4.0px solid transparent;border-top:4px solid #000;"></div>
<div style="left:967px;top:280px;width:96px;height:16px;background:#ffff80;box-sizing:border-box;border-top:2px solid #6e6e6e;border-left:2px solid #6e6e6e;"></div>
<div style="left:971px;top:283px;font-size:10.5px;line-height:13px;color:#000;white-space:pre;">Etiket Kodu</div>
<div style="left:1071px;top:280px;width:120px;height:18px;background:#fff;box-sizing:border-box;border-top:2px solid #6e6e6e;border-left:2px solid #6e6e6e;border-right:1px solid #e3e3e3;border-bottom:1px solid #e3e3e3;"></div>
<div style="left:967px;top:304px;width:224px;height:17px;background:#efefef;"></div>
<div style="left:967px;top:306px;width:12px;height:12px;background:#fff;box-sizing:border-box;border-top:2px solid #5a5a5a;border-left:2px solid #5a5a5a;border-right:1px solid #e0e0e0;border-bottom:1px solid #e0e0e0;"></div>
<div style="left:984px;top:305px;font-size:11px;line-height:14px;color:#1a1a3a;white-space:pre;">Malzeme Renklerini Kullan</div>
<div style="left:967px;top:324px;width:224px;height:26px;background:#efefef;box-sizing:border-box;border-top:1px solid #f8f8f8;border-left:1px solid #f8f8f8;border-right:2px solid #696969;border-bottom:2px solid #696969;"></div>
<div style="left:967px;top:330px;font-size:11px;line-height:14px;color:#a0a0a0;white-space:pre;width:224px;text-align:center;">Model Renklerini Yerleştir</div>
<div style="left:967px;top:351px;width:224px;height:26px;background:#efefef;box-sizing:border-box;border-top:1px solid #f8f8f8;border-left:1px solid #f8f8f8;border-right:2px solid #696969;border-bottom:2px solid #696969;"></div>
<div style="left:967px;top:357px;font-size:11px;line-height:14px;color:#a0a0a0;white-space:pre;width:224px;text-align:center;">Sipariş Renklerini Yerleştir</div>
<div style="left:967px;top:380px;width:224px;height:25px;background:#efefef;box-sizing:border-box;border-top:1px solid #f8f8f8;border-left:1px solid #f8f8f8;border-right:2px solid #696969;border-bottom:2px solid #696969;"></div>
<div style="left:967px;top:385px;font-size:11px;line-height:14px;color:#000;white-space:pre;width:224px;text-align:center;">Ek Malzemeler</div>
<div style="left:476px;top:414px;width:1104px;height:436px;background:#c0c0c0;"></div>
<div style="left:476px;top:414px;width:1087px;height:16px;background:#efefef;"></div>
<div style="left:476px;top:430px;width:1087px;height:1px;background:#a8a8a8;"></div>
<div style="left:509px;top:414px;width:1px;height:49px;background:#c8c8c8;"></div>
<div style="left:509px;top:418px;font-size:10.5px;line-height:13px;color:#000;white-space:pre;width:64px;text-align:center;">Rengi</div>
<div style="left:573px;top:414px;width:1px;height:49px;background:#c8c8c8;"></div>
<div style="left:573px;top:418px;font-size:10.5px;line-height:13px;color:#000;white-space:pre;width:97px;text-align:center;">Malzeme Rengi</div>
<div style="left:670px;top:414px;width:1px;height:49px;background:#c8c8c8;"></div>
<div style="left:670px;top:418px;font-size:10.5px;line-height:13px;color:#000;white-space:pre;width:97px;text-align:center;">Malz.Grup Kodu</div>
<div style="left:767px;top:414px;width:1px;height:49px;background:#c8c8c8;"></div>
<div style="left:767px;top:418px;font-size:10.5px;line-height:13px;color:#000;white-space:pre;width:113px;text-align:center;">Üret.Grup Kodu</div>
<div style="left:880px;top:414px;width:1px;height:49px;background:#c8c8c8;"></div>
<div style="left:880px;top:418px;font-size:10.5px;line-height:13px;color:#000;white-space:pre;width:65px;text-align:center;">S</div>
<div style="left:945px;top:414px;width:1px;height:49px;background:#c8c8c8;"></div>
<div style="left:945px;top:418px;font-size:10.5px;line-height:13px;color:#000;white-space:pre;width:65px;text-align:center;">M</div>
<div style="left:1010px;top:414px;width:1px;height:49px;background:#c8c8c8;"></div>
<div style="left:1010px;top:418px;font-size:10.5px;line-height:13px;color:#000;white-space:pre;width:64px;text-align:center;">L</div>
<div style="left:1074px;top:414px;width:1px;height:49px;background:#c8c8c8;"></div>
<div style="left:1074px;top:418px;font-size:10.5px;line-height:13px;color:#000;white-space:pre;width:66px;text-align:center;">XL</div>
<div style="left:1140px;top:414px;width:1px;height:49px;background:#c8c8c8;"></div>
<div style="left:1140px;top:418px;font-size:10.5px;line-height:13px;color:#000;white-space:pre;width:97px;text-align:center;">Satır Toplamı</div>
<div style="left:1237px;top:414px;width:1px;height:49px;background:#c8c8c8;"></div>
<div style="left:1237px;top:418px;font-size:10.5px;line-height:13px;color:#000;white-space:pre;width:64px;text-align:center;">Tolerans%</div>
<div style="left:1301px;top:414px;width:1px;height:49px;background:#c8c8c8;"></div>
<div style="left:1301px;top:418px;font-size:10.5px;line-height:13px;color:#000;white-space:pre;width:80px;text-align:center;">Toleranslı</div>
<div style="left:1381px;top:414px;width:1px;height:49px;background:#c8c8c8;"></div>
<div style="left:1381px;top:418px;font-size:10.5px;line-height:13px;color:#000;white-space:pre;width:122px;text-align:center;">Müş. Siparis No</div>
<div style="left:1503px;top:414px;width:1px;height:49px;background:#c8c8c8;"></div>
<div style="left:1503px;top:418px;font-size:10.5px;line-height:13px;color:#000;white-space:pre;width:41px;text-align:center;">İptal</div>
<div style="left:1544px;top:414px;width:1px;height:49px;background:#c8c8c8;"></div>
<div style="left:477px;top:431px;width:32px;height:16px;background:#efefef;"></div>
<div style="left:509px;top:431px;width:1054px;height:16px;background:#fff;"></div>
<div style="left:477px;top:446px;width:1086px;height:1px;background:#c8c8c8;"></div>
<div style="left:477px;top:433px;font-size:11px;line-height:14px;color:#000;white-space:pre;width:32px;text-align:center;">1</div>
<div style="left:477px;top:447px;width:32px;height:16px;background:#efefef;"></div>
<div style="left:509px;top:447px;width:1054px;height:16px;background:#fff;"></div>
<div style="left:477px;top:462px;width:1086px;height:1px;background:#c8c8c8;"></div>
<div style="left:477px;top:449px;font-size:11px;line-height:14px;color:#000;white-space:pre;width:32px;text-align:center;">2</div>
<div style="left:476px;top:462px;width:1087px;height:1px;background:#a8a8a8;"></div>
<div style="left:509px;top:431px;width:1px;height:32px;background:#c8c8c8;"></div>
<div style="left:573px;top:431px;width:1px;height:32px;background:#c8c8c8;"></div>
<div style="left:670px;top:431px;width:1px;height:32px;background:#c8c8c8;"></div>
<div style="left:767px;top:431px;width:1px;height:32px;background:#c8c8c8;"></div>
<div style="left:880px;top:431px;width:1px;height:32px;background:#c8c8c8;"></div>
<div style="left:945px;top:431px;width:1px;height:32px;background:#c8c8c8;"></div>
<div style="left:1010px;top:431px;width:1px;height:32px;background:#c8c8c8;"></div>
<div style="left:1074px;top:431px;width:1px;height:32px;background:#c8c8c8;"></div>
<div style="left:1140px;top:431px;width:1px;height:32px;background:#c8c8c8;"></div>
<div style="left:1237px;top:431px;width:1px;height:32px;background:#c8c8c8;"></div>
<div style="left:1301px;top:431px;width:1px;height:32px;background:#c8c8c8;"></div>
<div style="left:1381px;top:431px;width:1px;height:32px;background:#c8c8c8;"></div>
<div style="left:1503px;top:431px;width:1px;height:32px;background:#c8c8c8;"></div>
<div style="left:1544px;top:431px;width:1px;height:32px;background:#c8c8c8;"></div>
<div style="left:511px;top:433px;font-size:10.5px;line-height:13px;color:#000;white-space:pre;">MAVI</div>
<div style="left:672px;top:433px;font-size:10.5px;line-height:13px;color:#000;white-space:pre;">ORD123</div>
<div style="left:769px;top:433px;font-size:10.5px;line-height:13px;color:#000;white-space:pre;">ORD123</div>
<div style="left:880px;top:433px;font-size:10.5px;line-height:13px;color:#000;white-space:pre;width:62px;text-align:right;">500</div>
<div style="left:945px;top:433px;font-size:10.5px;line-height:13px;color:#000;white-space:pre;width:62px;text-align:right;">2,000</div>
<div style="left:1010px;top:433px;font-size:10.5px;line-height:13px;color:#000;white-space:pre;width:61px;text-align:right;">1,000</div>
<div style="left:1074px;top:433px;font-size:10.5px;line-height:13px;color:#000;white-space:pre;width:63px;text-align:right;">1,000</div>
<div style="left:1140px;top:433px;font-size:10.5px;line-height:13px;color:#000;white-space:pre;width:94px;text-align:right;">4,500</div>
<div style="left:1237px;top:433px;font-size:10.5px;line-height:13px;color:#000;white-space:pre;width:61px;text-align:right;">5</div>
<div style="left:1301px;top:433px;font-size:10.5px;line-height:13px;color:#000;white-space:pre;width:77px;text-align:right;">4,725</div>
<div style="left:1516px;top:432px;width:13px;height:13px;background:#d8d8d8;box-sizing:border-box;border-top:1px solid #f4f4f4;border-left:1px solid #f4f4f4;border-right:1px solid #8a8a8a;border-bottom:1px solid #8a8a8a;"></div>
<div style="left:511px;top:449px;font-size:10.5px;line-height:13px;color:#000;white-space:pre;">SARI</div>
<div style="left:672px;top:449px;font-size:10.5px;line-height:13px;color:#000;white-space:pre;">ORD123</div>
<div style="left:769px;top:449px;font-size:10.5px;line-height:13px;color:#000;white-space:pre;">ORD123</div>
<div style="left:880px;top:449px;font-size:10.5px;line-height:13px;color:#000;white-space:pre;width:62px;text-align:right;">500</div>
<div style="left:945px;top:449px;font-size:10.5px;line-height:13px;color:#000;white-space:pre;width:62px;text-align:right;">2,500</div>
<div style="left:1010px;top:449px;font-size:10.5px;line-height:13px;color:#000;white-space:pre;width:61px;text-align:right;">1,500</div>
<div style="left:1074px;top:449px;font-size:10.5px;line-height:13px;color:#000;white-space:pre;width:63px;text-align:right;">1,200</div>
<div style="left:1140px;top:449px;font-size:10.5px;line-height:13px;color:#000;white-space:pre;width:94px;text-align:right;">5,700</div>
<div style="left:1237px;top:449px;font-size:10.5px;line-height:13px;color:#000;white-space:pre;width:61px;text-align:right;">5</div>
<div style="left:1301px;top:449px;font-size:10.5px;line-height:13px;color:#000;white-space:pre;width:77px;text-align:right;">5,985</div>
<div style="left:1516px;top:448px;width:13px;height:13px;background:#d8d8d8;box-sizing:border-box;border-top:1px solid #f4f4f4;border-left:1px solid #f4f4f4;border-right:1px solid #8a8a8a;border-bottom:1px solid #8a8a8a;"></div>
<div style="left:1300px;top:430px;width:83px;height:19px;box-sizing:border-box;border:2px solid #000;"></div>
<div style="left:1563px;top:414px;width:17px;height:419px;background:#f4f4f4;"></div>
<div style="left:1563px;top:414px;width:16px;height:16px;background:#efefef;box-sizing:border-box;border-top:1px solid #fff;border-left:1px solid #fff;border-right:1px solid #808080;border-bottom:1px solid #808080;"></div>
<div style="left:1566.5px;top:419px;width:0;height:0;border-left:4.0px solid transparent;border-right:4.0px solid transparent;border-bottom:4px solid #000;"></div>
<div style="left:1563px;top:430px;width:16px;height:17px;background:#efefef;box-sizing:border-box;border-top:1px solid #fff;border-left:1px solid #fff;border-right:1px solid #808080;border-bottom:1px solid #808080;"></div>
<div style="left:1563px;top:817px;width:16px;height:16px;background:#efefef;box-sizing:border-box;border-top:1px solid #fff;border-left:1px solid #fff;border-right:1px solid #808080;border-bottom:1px solid #808080;"></div>
<div style="left:1566.5px;top:822px;width:0;height:0;border-left:4.0px solid transparent;border-right:4.0px solid transparent;border-top:4px solid #000;"></div>
<div style="left:1579px;top:412px;width:1px;height:438px;background:#696969;"></div>
<div style="left:476px;top:833px;width:1087px;height:17px;background:#f6f6f6;"></div>
<div style="left:476px;top:833px;width:15px;height:16px;background:#efefef;box-sizing:border-box;border-top:1px solid #fff;border-left:1px solid #fff;border-right:1px solid #808080;border-bottom:1px solid #808080;"></div>
<div style="left:480px;top:837.0px;width:0;height:0;border-top:4.0px solid transparent;border-bottom:4.0px solid transparent;border-right:4px solid #000;"></div>
<div style="left:491px;top:833px;width:17px;height:16px;background:#efefef;box-sizing:border-box;border-top:1px solid #fff;border-left:1px solid #fff;border-right:1px solid #808080;border-bottom:1px solid #808080;"></div>
<div style="left:1547px;top:833px;width:16px;height:16px;background:#efefef;box-sizing:border-box;border-top:1px solid #fff;border-left:1px solid #fff;border-right:1px solid #808080;border-bottom:1px solid #808080;"></div>
<div style="left:1553px;top:837.0px;width:0;height:0;border-top:4.0px solid transparent;border-bottom:4.0px solid transparent;border-left:4px solid #000;"></div>
<div style="left:1563px;top:833px;width:17px;height:17px;background:#c8c8c8;"></div>
<div style="left:476px;top:849px;width:1104px;height:2px;background:#6e6e6e;"></div>
<div style="left:479px;top:859px;width:851px;height:17px;background:#efefef;"></div>
<div style="left:479px;top:859px;font-size:11px;line-height:14px;color:#1a1a2a;white-space:pre;">Kaydı Giren : - 01/01/2000   Degistiren :ADMIN - 04/05/2019 13:21:45</div>
<div style="left:1336px;top:859px;width:104px;height:19px;background:#ffff80;box-sizing:border-box;border-top:2px solid #6e6e6e;border-left:2px solid #6e6e6e;"></div>
<div style="left:1340px;top:863px;font-size:10.5px;line-height:13px;color:#000;white-space:pre;">Sipariş Toplamı</div>
<div style="left:1467px;top:859px;width:96px;height:19px;background:#fff;box-sizing:border-box;border-top:2px solid #6e6e6e;border-left:2px solid #6e6e6e;border-right:1px solid #e3e3e3;border-bottom:1px solid #e3e3e3;"></div>
<div style="left:1467px;top:862px;font-size:11px;line-height:14px;color:#000;white-space:pre;width:92px;text-align:right;">10,200</div>
<div style="left:701px;top:888px;width:666px;height:6px;background:#efefef;"></div>
<div style="left:701px;top:893px;width:666px;height:69px;background:#efefef;box-sizing:border-box;border:1px solid #a8a8a8;"></div>
<div style="left:707px;top:899px;width:65px;height:58px;background:#efefef;box-sizing:border-box;border-top:1px solid #fafafa;border-left:1px solid #fafafa;border-right:2px solid #6e6e6e;border-bottom:2px solid #6e6e6e;"></div>
<svg style="left:721px;top:902px" width="36" height="37" viewBox="-2 -2 36 37">
<path d="M1 2.2 Q1 1 2.2 1 L29.8 1 Q31 1 31 2.2 L31 19.3 Q31 21 29.5 22.4 L28.1 23.9 L21.9 23.9 L13.5 31.4 L9 31.8 L7.7 31 L6.5 32 L2.2 32 Q1 32 1 30.8 Z" fill="#ffff80" stroke="#fff" stroke-width="3.6" stroke-linejoin="round"/>
<path d="M1 2.2 Q1 1 2.2 1 L29.8 1 Q31 1 31 2.2 L31 19.3 Q31 21 29.5 22.4 L28.1 23.9 L21.9 23.9 L13.5 31.4 L9 31.8 L7.7 31 L6.5 32 L2.2 32 Q1 32 1 30.8 Z" fill="#ffff80" stroke="#111" stroke-width="1.8" stroke-linejoin="round"/>
<path d="M7.3 10.5 H30.2 M7.3 17.8 H30.2 M7.3 25 H20.5" stroke="#2020ff" stroke-width="1.4"/>
</svg>
<div style="left:707px;top:941px;font-size:11px;line-height:14px;color:#8a8a8a;white-space:pre;width:65px;text-align:center;">Yeni Kayıt</div>
<div style="left:779px;top:899px;width:65px;height:58px;background:#efefef;box-sizing:border-box;border-top:1px solid #fafafa;border-left:1px solid #fafafa;border-right:2px solid #6e6e6e;border-bottom:2px solid #6e6e6e;"></div>
<svg style="left:793px;top:902px" width="36" height="37" viewBox="-2 -2 36 37">
<path d="M1 2.2 Q1 1 2.2 1 L29.8 1 Q31 1 31 2.2 L31 19.3 Q31 21 29.5 22.4 L28.1 23.9 L21.9 23.9 L13.5 31.4 L9 31.8 L7.7 31 L6.5 32 L2.2 32 Q1 32 1 30.8 Z" fill="#ffff80" stroke="#fff" stroke-width="3.6" stroke-linejoin="round"/>
<path d="M1 2.2 Q1 1 2.2 1 L29.8 1 Q31 1 31 2.2 L31 19.3 Q31 21 29.5 22.4 L28.1 23.9 L21.9 23.9 L13.5 31.4 L9 31.8 L7.7 31 L6.5 32 L2.2 32 Q1 32 1 30.8 Z" fill="#ffff80" stroke="#111" stroke-width="1.8" stroke-linejoin="round"/>
<path d="M7.3 10.5 H30.2 M7.3 17.8 H30.2 M7.3 25 H20.5" stroke="#2020ff" stroke-width="1.4"/>
</svg>
<div style="left:779px;top:941px;font-size:11px;line-height:14px;color:#8a8a8a;white-space:pre;width:65px;text-align:center;">Değiştir</div>
<div style="left:851px;top:899px;width:57px;height:58px;background:#efefef;box-sizing:border-box;border-top:1px solid #fafafa;border-left:1px solid #fafafa;border-right:2px solid #6e6e6e;border-bottom:2px solid #6e6e6e;"></div>
<svg style="left:864px;top:904px" width="28" height="31" viewBox="0 0 28 31">
<defs><linearGradient id="fbody" x1="0" x2="1" y1="0" y2="0"><stop offset="0" stop-color="#6a6a6a"/><stop offset="0.15" stop-color="#b8b8b0"/><stop offset="0.85" stop-color="#b8b8b0"/><stop offset="1" stop-color="#6a6a6a"/></linearGradient>
<linearGradient id="flab" x1="0" x2="0" y1="0" y2="1"><stop offset="0" stop-color="#1080ff"/><stop offset="0.5" stop-color="#70c0ff"/><stop offset="1" stop-color="#e0ffff"/></linearGradient>
<linearGradient id="fsh" x1="0" x2="1" y1="0" y2="0"><stop offset="0" stop-color="#909090"/><stop offset="0.2" stop-color="#fff"/><stop offset="0.8" stop-color="#fff"/><stop offset="1" stop-color="#909090"/></linearGradient></defs>
<rect x="0.5" y="0.5" width="27" height="29.5" rx="2.5" fill="url(#fbody)" stroke="#505050"/>
<path d="M5.5 0.5 H22.5 V9 Q22.5 11 20.5 11 H7.5 Q5.5 11 5.5 9 Z" fill="url(#fsh)" stroke="#555"/>
<rect x="8.2" y="2.6" width="3.3" height="6" fill="#666"/>
<rect x="3.8" y="13.7" width="20" height="16.2" fill="url(#flab)"/>
<path d="M3.8 14.2 H23.8" stroke="#5a14c8" stroke-width="1.1"/>
<path d="M4.3 14.5 V29.8 M23.3 14.5 V29.8" stroke="#1a78ff" stroke-width="1"/>
<path d="M7 17.5 H20.5 M7 20 H20.5 M7 23.5 H20.5" stroke="#a8dcff" stroke-width="0.8"/>
</svg>
<div style="left:851px;top:941px;font-size:11px;line-height:14px;color:#000;white-space:pre;width:57px;text-align:center;">Kaydet</div>
<div style="left:914px;top:899px;width:57px;height:58px;background:#efefef;box-sizing:border-box;border-top:1px solid #fafafa;border-left:1px solid #fafafa;border-right:2px solid #6e6e6e;border-bottom:2px solid #6e6e6e;"></div>
<svg style="left:927px;top:904px" width="30" height="35" viewBox="0 0 30 35">
<defs><radialGradient id="csp" cx="0.38" cy="0.3" r="0.8"><stop offset="0" stop-color="#ffffff"/><stop offset="0.45" stop-color="#e6e6e6"/><stop offset="0.8" stop-color="#bdbdbd"/><stop offset="1" stop-color="#9a9a9a"/></radialGradient>
<radialGradient id="csh" cx="0.5" cy="0.5" r="0.5"><stop offset="0" stop-color="#303030" stop-opacity="0.95"/><stop offset="0.6" stop-color="#606060" stop-opacity="0.6"/><stop offset="1" stop-color="#aaa" stop-opacity="0"/></radialGradient></defs>
<ellipse cx="15" cy="31" rx="14.5" ry="3.4" fill="url(#csh)"/>
<circle cx="15" cy="14.5" r="13.8" fill="url(#csp)" stroke="#a8a8a8" stroke-width="1"/>
<rect x="4.5" y="9.8" width="21" height="10" fill="#fefefe" stroke="#a8a8a8" stroke-width="0.9" transform="rotate(-45 15 14.8)"/>
</svg>
<div style="left:914px;top:941px;font-size:11px;line-height:14px;color:#000;white-space:pre;width:57px;text-align:center;">İptal</div>
<div style="left:978px;top:899px;width:57px;height:58px;background:#efefef;box-sizing:border-box;border-top:1px solid #fafafa;border-left:1px solid #fafafa;border-right:2px solid #6e6e6e;border-bottom:2px solid #6e6e6e;"></div>
<svg style="left:988px;top:902px" width="36" height="37" viewBox="-2 -2 36 37">
<path d="M1 2.2 Q1 1 2.2 1 L29.8 1 Q31 1 31 2.2 L31 19.3 Q31 21 29.5 22.4 L28.1 23.9 L21.9 23.9 L13.5 31.4 L9 31.8 L7.7 31 L6.5 32 L2.2 32 Q1 32 1 30.8 Z" fill="#ffff80" stroke="#fff" stroke-width="3.6" stroke-linejoin="round"/>
<path d="M1 2.2 Q1 1 2.2 1 L29.8 1 Q31 1 31 2.2 L31 19.3 Q31 21 29.5 22.4 L28.1 23.9 L21.9 23.9 L13.5 31.4 L9 31.8 L7.7 31 L6.5 32 L2.2 32 Q1 32 1 30.8 Z" fill="#ffff80" stroke="#111" stroke-width="1.8" stroke-linejoin="round"/>
<path d="M7.3 10.5 H30.2 M7.3 17.8 H30.2 M7.3 25 H20.5" stroke="#2020ff" stroke-width="1.4"/>
</svg>
<div style="left:978px;top:941px;font-size:11px;line-height:14px;color:#8a8a8a;white-space:pre;width:57px;text-align:center;">Arama</div>
<div style="left:1042px;top:899px;width:57px;height:58px;background:#efefef;box-sizing:border-box;border-top:1px solid #fafafa;border-left:1px solid #fafafa;border-right:2px solid #6e6e6e;border-bottom:2px solid #6e6e6e;"></div>
<svg style="left:1052px;top:902px" width="36" height="37" viewBox="-2 -2 36 37">
<path d="M1 2.2 Q1 1 2.2 1 L29.8 1 Q31 1 31 2.2 L31 19.3 Q31 21 29.5 22.4 L28.1 23.9 L21.9 23.9 L13.5 31.4 L9 31.8 L7.7 31 L6.5 32 L2.2 32 Q1 32 1 30.8 Z" fill="#ffff80" stroke="#fff" stroke-width="3.6" stroke-linejoin="round"/>
<path d="M1 2.2 Q1 1 2.2 1 L29.8 1 Q31 1 31 2.2 L31 19.3 Q31 21 29.5 22.4 L28.1 23.9 L21.9 23.9 L13.5 31.4 L9 31.8 L7.7 31 L6.5 32 L2.2 32 Q1 32 1 30.8 Z" fill="#ffff80" stroke="#111" stroke-width="1.8" stroke-linejoin="round"/>
<path d="M7.3 10.5 H30.2 M7.3 17.8 H30.2 M7.3 25 H20.5" stroke="#2020ff" stroke-width="1.4"/>
</svg>
<div style="left:1042px;top:941px;font-size:11px;line-height:14px;color:#8a8a8a;white-space:pre;width:57px;text-align:center;">Silme</div>
<div style="left:1106px;top:899px;width:57px;height:58px;background:#efefef;box-sizing:border-box;border-top:1px solid #fafafa;border-left:1px solid #fafafa;border-right:2px solid #6e6e6e;border-bottom:2px solid #6e6e6e;"></div>
<svg style="left:1116px;top:902px" width="36" height="37" viewBox="-2 -2 36 37">
<path d="M1 2.2 Q1 1 2.2 1 L29.8 1 Q31 1 31 2.2 L31 19.3 Q31 21 29.5 22.4 L28.1 23.9 L21.9 23.9 L13.5 31.4 L9 31.8 L7.7 31 L6.5 32 L2.2 32 Q1 32 1 30.8 Z" fill="#ffff80" stroke="#fff" stroke-width="3.6" stroke-linejoin="round"/>
<path d="M1 2.2 Q1 1 2.2 1 L29.8 1 Q31 1 31 2.2 L31 19.3 Q31 21 29.5 22.4 L28.1 23.9 L21.9 23.9 L13.5 31.4 L9 31.8 L7.7 31 L6.5 32 L2.2 32 Q1 32 1 30.8 Z" fill="#ffff80" stroke="#111" stroke-width="1.8" stroke-linejoin="round"/>
<path d="M7.3 10.5 H30.2 M7.3 17.8 H30.2 M7.3 25 H20.5" stroke="#2020ff" stroke-width="1.4"/>
</svg>
<div style="left:1106px;top:941px;font-size:11px;line-height:14px;color:#8a8a8a;white-space:pre;width:57px;text-align:center;">Önceki</div>
<div style="left:1164px;top:899px;width:57px;height:58px;background:#efefef;box-sizing:border-box;border-top:1px solid #fafafa;border-left:1px solid #fafafa;border-right:2px solid #6e6e6e;border-bottom:2px solid #6e6e6e;"></div>
<svg style="left:1174px;top:902px" width="36" height="37" viewBox="-2 -2 36 37">
<path d="M1 2.2 Q1 1 2.2 1 L29.8 1 Q31 1 31 2.2 L31 19.3 Q31 21 29.5 22.4 L28.1 23.9 L21.9 23.9 L13.5 31.4 L9 31.8 L7.7 31 L6.5 32 L2.2 32 Q1 32 1 30.8 Z" fill="#ffff80" stroke="#fff" stroke-width="3.6" stroke-linejoin="round"/>
<path d="M1 2.2 Q1 1 2.2 1 L29.8 1 Q31 1 31 2.2 L31 19.3 Q31 21 29.5 22.4 L28.1 23.9 L21.9 23.9 L13.5 31.4 L9 31.8 L7.7 31 L6.5 32 L2.2 32 Q1 32 1 30.8 Z" fill="#ffff80" stroke="#111" stroke-width="1.8" stroke-linejoin="round"/>
<path d="M7.3 10.5 H30.2 M7.3 17.8 H30.2 M7.3 25 H20.5" stroke="#2020ff" stroke-width="1.4"/>
</svg>
<div style="left:1164px;top:941px;font-size:11px;line-height:14px;color:#8a8a8a;white-space:pre;width:57px;text-align:center;">Sonraki</div>
<div style="left:1228px;top:899px;width:65px;height:58px;background:#efefef;box-sizing:border-box;border-top:1px solid #fafafa;border-left:1px solid #fafafa;border-right:2px solid #6e6e6e;border-bottom:2px solid #6e6e6e;"></div>
<svg style="left:1245px;top:900px" width="30" height="32" viewBox="0 0 30 32">
<defs><radialGradient id="ksh" cx="0.5" cy="0.5" r="0.5"><stop offset="0" stop-color="#2a2a2a" stop-opacity="0.95"/><stop offset="0.6" stop-color="#555" stop-opacity="0.6"/><stop offset="1" stop-color="#999" stop-opacity="0"/></radialGradient>
<linearGradient id="kfill" x1="0" x2="1" y1="0" y2="1"><stop offset="0" stop-color="#8cc8ff"/><stop offset="0.5" stop-color="#e8f6ff"/><stop offset="1" stop-color="#c8ecff"/></linearGradient></defs>
<ellipse cx="14.8" cy="26.6" rx="14" ry="2.8" fill="url(#ksh)"/>
<path d="M12.4 2.2 Q21 2.2 24.5 11.5 L27 13.3 L22.1 18.9 L17.3 13.7 L19.8 12.8 Q17.5 7.4 12.4 7.4 Z" fill="url(#kfill)" stroke="#1a6cff" stroke-width="1.5" stroke-linejoin="round"/>
<path d="M18.1 25 Q9.5 25 6 16 L3.2 14.5 L8.1 8.6 L12.5 14.3 L10.5 15.5 Q12.8 20.5 18.1 20.5 Z" fill="url(#kfill)" stroke="#1a6cff" stroke-width="1.5" stroke-linejoin="round"/>
</svg>
<div style="left:1228px;top:941px;font-size:11px;line-height:14px;color:#000;white-space:pre;width:65px;text-align:center;">Kopyala</div>
<div style="left:1300px;top:899px;width:65px;height:58px;background:#efefef;box-sizing:border-box;border-top:1px solid #fafafa;border-left:1px solid #fafafa;border-right:2px solid #6e6e6e;border-bottom:2px solid #6e6e6e;"></div>
<svg style="left:1317px;top:905px" width="31" height="32" viewBox="0 0 31 32">
<rect x="0" y="0" width="31" height="32" fill="#000"/>
<circle cx="22.3" cy="8" r="2.3" fill="#fff"/>
<path d="M21 11 L24 11.5 L25 15 L29 15.3 L28.5 17 L24.5 17.5 L23.5 16 L23 19.5 L25 24 L25.3 27.5 L27 28.5 L26 29.2 L22 29 L23 24.5 L20.5 20.5 L18.5 24.5 L17.8 28 L19 29.3 L16 29.2 L15.5 27.5 L17.5 19.5 L18.5 17.5 L16.5 17.5 Q15 16.5 15.8 14.5 Z" fill="#fff"/>
<circle cx="18.2" cy="15.3" r="0.9" fill="#000"/>
</svg>
<div style="left:1300px;top:941px;font-size:11px;line-height:14px;color:#8a8a8a;white-space:pre;width:65px;text-align:center;">Çıkış</div></body></html>
